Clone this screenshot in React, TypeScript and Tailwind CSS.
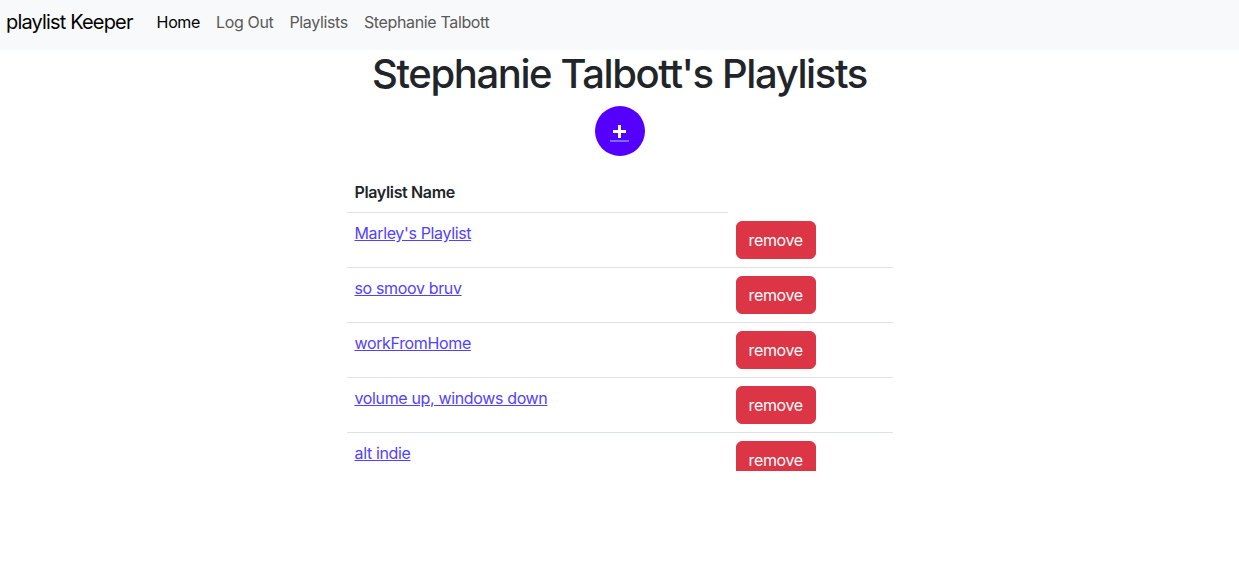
const playlists = [
  "Marley's Playlist",
  "so smoov bruv",
  "workFromHome",
  "volume up, windows down",
  "alt indie",
];

export default function App() {
  return (
    <div className="min-h-[562px] bg-white font-['Inter',sans-serif] tracking-[-0.022em] text-[#212529]">
      {/* navbar */}
      <nav className="flex h-[50px] items-center bg-[#f8f9fa] pb-[6px] pl-[6px]">
        <span className="mr-4 text-[20px] tracking-[-0.042em] text-black">playlist Keeper</span>
        <a href="#" className="px-2 text-[16px] text-black">Home</a>
        <a href="#" className="px-2 text-[16px] text-[#595959]">Log Out</a>
        <a href="#" className="px-2 text-[16px] text-[#595959]">Playlists</a>
        <a href="#" className="px-2 text-[16px] text-[#595959]">Stephanie Talbott</a>
      </nav>

      <div className="flex flex-col items-center">
        <h1 className="mb-2 text-[40px] font-medium leading-[48px] tracking-[-0.035em]">Stephanie Talbott's Playlists</h1>
        <button className="flex h-[50px] w-[50px] flex-col items-center justify-center rounded-full bg-[#5500ff]">
          <svg width="13" height="13" viewBox="0 0 13 13" className="mt-[5px] shrink-0">
            <path d="M6.5 0v13M0 6.5h13" stroke="white" strokeWidth="3" />
          </svg>
          <span className="mt-[2px] block h-[2px] w-[19px] shrink-0 bg-[#7a6cff]" />
        </button>

        <div className="mt-4 h-[299px] w-[546px] overflow-hidden">
          <table className="w-full border-collapse text-[16px] leading-6">
            <thead>
              <tr>
                <th className="w-[381px] border-b border-[#dee2e6] p-2 text-left font-semibold">Playlist Name</th>
              </tr>
            </thead>
            <tbody>
              {playlists.map((name) => (
                <tr key={name} className="border-b border-[#dee2e6]">
                  <td className="p-2 align-top">
                    <a href="#" className="text-[#5242ff] underline">{name}</a>
                  </td>
                  <td className="p-2 align-top">
                    <button className="rounded-md border border-[#dc3545] bg-[#dc3545] px-3 py-1.5 leading-6 text-white">remove</button>
                  </td>
                </tr>
              ))}
            </tbody>
          </table>
        </div>
      </div>
    </div>
  );
}
